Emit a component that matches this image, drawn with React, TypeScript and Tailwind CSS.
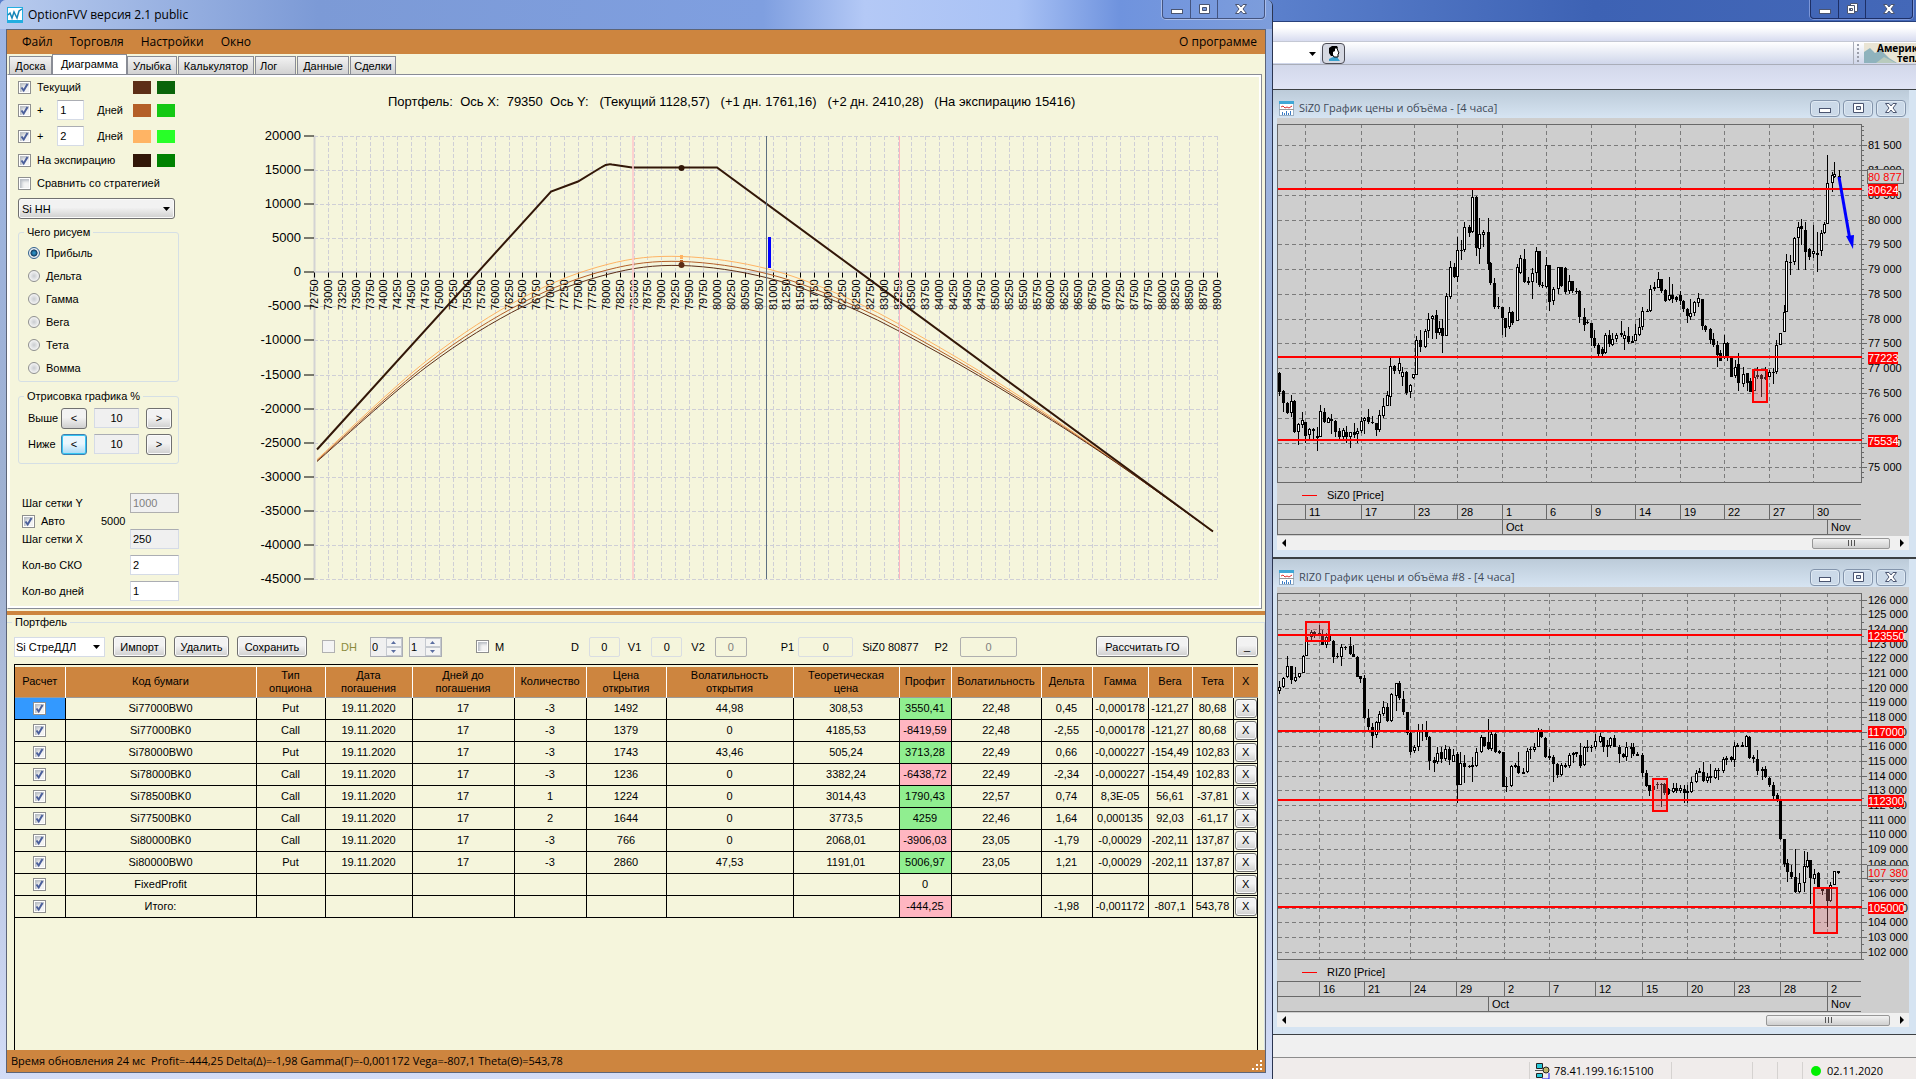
import React from 'react';
import clsx from 'clsx';

type Bar = [x: number, high: number, top: number, bottom: number, low: number, up: 0 | 1];

// Bars are sampled on the terminal grid: x in 0.412 px units, y in thirds of a pixel
const SI_BARS: Bar[] = [
  [23, 307, 309, 367, 378, 0], [32, 361, 364, 398, 425, 0], [41, 395, 400, 428, 432, 0], [50, 375, 393, 430, 440, 1],
  [59, 390, 393, 485, 490, 0], [68, 458, 462, 486, 524, 1], [78, 425, 450, 464, 474, 1], [86, 455, 457, 497, 520, 0],
  [95, 475, 478, 495, 508, 1], [104, 475, 478, 484, 510, 1], [113, 470, 498, 504, 542, 0], [122, 405, 423, 500, 500, 1],
  [131, 415, 425, 455, 460, 0], [140, 440, 445, 458, 460, 1], [149, 432, 448, 452, 492, 0], [158, 450, 452, 486, 500, 0],
  [167, 475, 484, 500, 510, 0], [176, 473, 480, 500, 506, 1], [185, 468, 487, 500, 518, 0], [195, 485, 487, 500, 533, 1],
  [203, 460, 487, 495, 505, 0], [212, 475, 484, 492, 518, 1], [221, 440, 453, 484, 490, 1], [229, 440, 443, 452, 492, 1],
  [238, 418, 441, 455, 462, 0], [247, 437, 455, 459, 462, 0], [258, 458, 460, 480, 497, 0], [265, 420, 436, 480, 487, 1],
  [275, 385, 409, 437, 443, 1], [284, 363, 375, 407, 407, 1], [292, 262, 287, 380, 407, 1], [302, 285, 287, 302, 312, 0],
  [312, 264, 280, 302, 312, 1], [321, 290, 306, 320, 347, 1], [329, 304, 306, 368, 374, 0], [339, 342, 345, 367, 384, 1],
  [348, 313, 313, 325, 327, 1], [355, 198, 210, 314, 314, 1], [365, 180, 210, 232, 246, 0], [375, 178, 183, 232, 234, 1],
  [383, 130, 148, 182, 203, 1], [392, 135, 137, 148, 206, 1], [402, 121, 136, 190, 206, 0], [410, 152, 175, 188, 195, 1],
  [418, 148, 174, 197, 248, 0], [428, 70, 79, 197, 197, 1], [438, -27, -8, 80, 88, 1], [446, -20, -8, 20, 25, 0],
  [455, -98, -60, 20, 35, 1], [464, -90, -60, -58, -30, 1], [472, -145, -129, -60, -55, 1], [482, -135, -130, -110, -100, 0],
  [491, -240, -219, -113, -110, 1], [499, -222, -220, -65, -42, 0], [508, -155, -108, -62, -18, 1], [518, -120, -114, -104, -70, 1],
  [528, -155, -115, -18, 0, 0], [535, -25, -20, 38, 45, 0], [544, 24, 38, 110, 117, 0], [554, 80, 108, 111, 118, 0],
  [562, 110, 112, 145, 195, 0], [571, 143, 143, 174, 200, 0], [581, 112, 126, 172, 176, 1], [588, 124, 127, 158, 165, 0],
  [599, -18, -10, 152, 152, 1], [608, -45, -36, 8, 12, 1], [617, -62, -32, 36, 40, 0], [627, 20, 34, 38, 44, 0],
  [635, -5, 10, 35, 87, 1], [645, -70, -56, 9, 40, 1], [652, -56, -56, 44, 50, 0], [661, 35, 44, 48, 55, 0],
  [671, -38, -14, 50, 55, 1], [678, -14, -14, 95, 122, 0], [688, 50, 58, 94, 104, 1], [699, -8, -8, 58, 72, 1],
  [707, -10, -8, 47, 50, 0], [715, -10, -6, 65, 72, 0], [725, 15, 34, 64, 72, 1], [733, 32, 34, 64, 68, 0],
  [742, 55, 62, 66, 72, 0], [751, 60, 64, 142, 158, 0], [761, 115, 142, 164, 182, 0], [770, 150, 157, 160, 162, 0],
  [778, 158, 160, 203, 227, 0], [787, 180, 203, 228, 234, 0], [797, 220, 225, 252, 258, 0], [805, 232, 236, 253, 258, 0],
  [814, 188, 196, 250, 253, 1], [824, 180, 196, 221, 231, 0], [831, 190, 206, 226, 227, 1], [841, 188, 196, 208, 216, 1],
  [851, 152, 190, 196, 202, 0], [860, 182, 195, 206, 240, 1], [869, 172, 198, 215, 221, 0], [878, 198, 212, 218, 218, 1],
  [887, 162, 193, 212, 212, 1], [896, 145, 171, 194, 198, 1], [904, 112, 124, 172, 181, 1], [914, 118, 122, 126, 126, 0],
  [922, 45, 57, 123, 127, 1], [931, 37, 52, 58, 62, 1], [941, 7, 28, 53, 53, 1], [949, 27, 27, 62, 68, 0],
  [958, 58, 61, 92, 96, 0], [968, 20, 75, 90, 94, 1], [976, 43, 74, 88, 98, 0], [986, 78, 82, 90, 95, 0],
  [994, 63, 76, 92, 104, 0], [1003, 90, 92, 118, 125, 0], [1011, 115, 118, 138, 158, 0], [1020, 88, 130, 140, 150, 1],
  [1030, 93, 97, 130, 138, 1], [1040, 68, 85, 98, 112, 1], [1048, 86, 87, 168, 180, 0], [1057, 165, 168, 180, 186, 0],
  [1067, 175, 178, 210, 223, 0], [1075, 190, 208, 226, 230, 0], [1084, 212, 226, 256, 292, 0], [1093, 240, 248, 272, 273, 0],
  [1102, 196, 218, 262, 267, 1], [1110, 216, 218, 262, 274, 0], [1120, 258, 265, 320, 320, 0], [1129, 270, 290, 317, 325, 1],
  [1137, 248, 283, 340, 362, 0], [1147, 290, 311, 342, 352, 1], [1157, 308, 310, 340, 362, 0], [1165, 325, 333, 366, 366, 0],
  [1174, 298, 322, 362, 362, 1], [1183, 292, 315, 322, 328, 1], [1191, 312, 315, 326, 382, 0], [1201, 292, 322, 328, 330, 0],
  [1210, 300, 307, 320, 322, 1], [1220, 293, 305, 308, 342, 0], [1227, 210, 226, 305, 312, 1], [1237, 190, 190, 226, 226, 1],
  [1247, 105, 127, 186, 186, 1], [1253, -48, -27, 127, 127, 1], [1263, -45, -25, -22, 15, 0], [1272, -98, -95, -25, -15, 1],
  [1281, -145, -128, -95, 0, 1], [1290, -153, -133, -122, -75, 0], [1299, -145, -120, -55, 0, 0], [1309, -65, -62, -40, -30, 0],
  [1317, -135, -57, -48, -35, 1], [1327, -115, -50, -46, 5, 0], [1337, -120, -112, -57, -42, 1], [1344, -145, -137, -110, -108, 1],
  [1353, -345, -260, -137, -137, 1], [1363, -295, -285, -262, -235, 1], [1370, -325, -287, -280, -275, 1], [1380, -300, -282, -275, -270, 0],
];

const RI_BARS: Bar[] = [
  [23, 394, 412, 424, 432, 1], [32, 381, 385, 412, 414, 1], [42, 318, 349, 381, 384, 1], [52, 348, 349, 391, 401, 0],
  [61, 351, 381, 392, 395, 1], [71, 368, 370, 382, 384, 1], [81, 315, 317, 370, 370, 1], [88, 250, 262, 318, 318, 1],
  [99, 240, 245, 262, 270, 1], [108, 243, 245, 256, 265, 0], [118, 225, 250, 256, 258, 0], [127, 240, 256, 284, 284, 0],
  [135, 250, 262, 284, 294, 1], [144, 237, 255, 272, 275, 0], [154, 270, 272, 320, 338, 0], [163, 310, 318, 322, 324, 0],
  [173, 282, 292, 320, 347, 1], [182, 288, 290, 293, 300, 0], [193, 262, 289, 311, 314, 0], [202, 285, 311, 320, 322, 0],
  [210, 318, 320, 380, 380, 0], [219, 378, 378, 386, 400, 0], [229, 375, 385, 505, 507, 0], [238, 478, 505, 530, 540, 0],
  [248, 520, 530, 557, 594, 0], [258, 512, 515, 556, 563, 1], [265, 484, 493, 518, 545, 1], [275, 453, 471, 493, 498, 1],
  [285, 458, 472, 512, 515, 0], [294, 430, 433, 512, 515, 1], [305, 398, 400, 437, 483, 1], [314, 392, 400, 445, 450, 0],
  [323, 422, 447, 485, 495, 0], [332, 485, 487, 550, 555, 0], [341, 545, 550, 605, 616, 0], [350, 586, 590, 604, 608, 1],
  [360, 523, 539, 590, 602, 1], [369, 523, 540, 545, 572, 0], [379, 513, 540, 560, 570, 0], [387, 558, 562, 632, 660, 0],
  [397, 622, 630, 638, 665, 0], [406, 590, 610, 636, 643, 1], [416, 590, 605, 628, 638, 0], [425, 585, 597, 628, 632, 1],
  [434, 592, 598, 630, 645, 0], [445, 598, 614, 635, 637, 1], [453, 605, 612, 705, 758, 0], [462, 605, 640, 704, 706, 1],
  [472, 615, 640, 650, 700, 0], [482, 645, 648, 652, 655, 0], [491, 620, 645, 650, 695, 0], [501, 595, 606, 648, 650, 1],
  [511, 555, 562, 606, 610, 1], [519, 560, 562, 588, 592, 0], [528, 508, 575, 598, 600, 0], [537, 545, 552, 598, 602, 1],
  [547, 550, 553, 605, 608, 0], [556, 600, 604, 608, 612, 0], [566, 605, 607, 710, 712, 0], [574, 680, 708, 710, 725, 1],
  [584, 645, 648, 708, 710, 1], [594, 640, 645, 650, 655, 0], [603, 605, 648, 670, 672, 0], [613, 655, 665, 672, 672, 0],
  [623, 595, 602, 665, 668, 1], [632, 590, 597, 600, 628, 0], [640, 580, 592, 600, 605, 1], [650, 535, 540, 590, 592, 1],
  [658, 538, 540, 562, 565, 0], [668, 560, 565, 620, 625, 0], [678, 598, 618, 624, 630, 0], [688, 615, 622, 642, 695, 0],
  [697, 640, 643, 675, 685, 0], [706, 640, 645, 675, 677, 1], [715, 640, 645, 650, 655, 0], [725, 610, 615, 648, 655, 1],
  [735, 605, 608, 614, 640, 0], [743, 605, 606, 612, 620, 0], [753, 580, 614, 648, 653, 0], [761, 587, 590, 646, 648, 1],
  [770, 570, 590, 594, 605, 0], [780, 585, 590, 592, 605, 0], [790, 553, 574, 590, 598, 1], [800, 550, 558, 575, 578, 1],
  [809, 560, 562, 590, 605, 0], [817, 570, 586, 592, 620, 0], [826, 562, 565, 588, 595, 1], [836, 555, 564, 590, 592, 0],
  [846, 585, 590, 612, 640, 0], [856, 610, 613, 620, 625, 0], [865, 575, 590, 622, 632, 1], [875, 580, 590, 598, 625, 1],
  [882, 578, 590, 612, 618, 0], [891, 605, 612, 618, 618, 0], [902, 610, 614, 668, 682, 0], [912, 660, 668, 707, 710, 0],
  [921, 704, 706, 724, 738, 0], [929, 690, 708, 720, 722, 1], [939, 695, 702, 706, 716, 0], [948, 700, 702, 706, 770, 0],
  [957, 700, 702, 728, 735, 0], [967, 715, 718, 732, 735, 0], [978, 700, 714, 726, 728, 1], [986, 700, 714, 722, 728, 0],
  [996, 705, 714, 724, 730, 1], [1004, 705, 716, 728, 758, 0], [1013, 705, 724, 728, 758, 0], [1023, 680, 695, 726, 728, 1],
  [1033, 660, 668, 695, 700, 1], [1042, 655, 663, 668, 670, 1], [1052, 637, 665, 692, 695, 0], [1061, 670, 680, 692, 698, 1],
  [1069, 642, 678, 684, 700, 0], [1079, 655, 660, 684, 686, 1], [1088, 655, 660, 664, 690, 0], [1099, 622, 626, 664, 668, 1],
  [1108, 618, 624, 630, 645, 0], [1118, 618, 620, 630, 635, 0], [1125, 575, 588, 630, 650, 1], [1134, 578, 584, 590, 592, 0],
  [1145, 575, 585, 590, 592, 0], [1155, 555, 558, 590, 592, 1], [1163, 558, 560, 624, 626, 0], [1173, 615, 620, 628, 640, 0],
  [1183, 600, 628, 664, 675, 0], [1193, 650, 656, 664, 690, 1], [1201, 648, 656, 682, 685, 0], [1210, 680, 683, 704, 710, 0],
  [1220, 695, 704, 738, 750, 0], [1230, 730, 735, 752, 755, 0], [1239, 750, 752, 868, 870, 0], [1247, 867, 868, 943, 950, 0],
  [1256, 928, 940, 966, 995, 0], [1265, 945, 965, 982, 988, 0], [1275, 897, 982, 1025, 1030, 0], [1285, 968, 998, 1025, 1030, 1],
  [1295, 903, 948, 1000, 1027, 1], [1304, 905, 930, 950, 955, 1], [1311, 930, 930, 985, 1062, 0], [1321, 958, 972, 988, 1002, 1],
  [1331, 965, 970, 1010, 1015, 0], [1341, 1013, 1018, 1022, 1035, 0], [1351, 1015, 1018, 1052, 1130, 0], [1360, 995, 1005, 1052, 1055, 1],
  [1368, 962, 964, 1004, 1005, 1], [1378, 962, 964, 968, 973, 0],
];

interface PriceChartProps {
  label: string;
  height: number;
  offset: number;
  bars: Bar[];
  top: number;
  bottom: number;
  first: number; // price of the upper grid line
  firstY: number;
  step: number;
  stepY: number;
  minor: number;
  count: number;
  dates: [number, string][];
  months: [number, string][];
  levels: [number, string][];
  last: [number, string];
  zones: [number, number, number, number][];
  arrow?: boolean;
}

const px = (u: number) => Math.round(u * 0.412) - 7;
const groups = (n: number) => `${Math.floor(n / 1000)} ${String(n % 1000).padStart(3, '0')}`;

const PriceChart: React.FC<PriceChartProps> = (p) => {
  const py = (u: number) => Math.round(u / 3) + p.offset;
  const right = px(1434);
  const top = py(p.top);
  const bottom = py(p.bottom);
  const axis = bottom + 22;
  const badge = p.last[1].length > 6 ? 36 : 30;
  const rows = Array.from({ length: p.count }, (_, i) => ({ y: py(p.firstY + i * p.stepY), v: p.first - i * p.step }));
  const minorStep = p.stepY / p.minor;
  const ticks: number[] = [];
  for (let u = p.firstY - Math.floor((p.firstY - p.top) / minorStep) * minorStep; u < p.bottom; u += minorStep) ticks.push(py(u));

  return (
    <svg
      viewBox={`0 0 632 ${p.height}`}
      className="block w-full bg-[#cecece] font-['Liberation_Sans',sans-serif] text-[11px]"
      shapeRendering="crispEdges"
      role="img"
      aria-label={p.label}
    >
      <g stroke="#7b7b7b" strokeDasharray="4 3">
        {rows.map((r) => <line key={r.v} x1="1" x2={right} y1={r.y + 0.5} y2={r.y + 0.5} />)}
        {p.dates.map(([x]) => <line key={x} x1={px(x) + 0.5} x2={px(x) + 0.5} y1={top} y2={bottom} />)}
      </g>
      <path d={`M0.5 ${bottom + 0.5}V${top + 0.5}H${right + 0.5}V${bottom + 0.5}Z`} fill="none" stroke="#696969" />
      {ticks.map((y) => <line key={y} x1={right} x2={right + 3} y1={y + 0.5} y2={y + 0.5} stroke="#696969" />)}
      {rows.map((r) => (
        <g key={r.v}>
          <line x1={right} x2={right + 6} y1={r.y + 0.5} y2={r.y + 0.5} stroke="#696969" />
          <text x={px(1452)} y={r.y + 4}>{groups(r.v)}</text>
        </g>
      ))}

      {p.bars.map(([x, high, t, b, low, up]) => {
        const h = Math.max(py(b) - py(t), 1);
        return (
          <g key={x}>
            <rect x={px(x)} y={py(high)} width="1" height={Math.max(py(low) - py(high), 1)} />
            <rect x={px(x) - 1} y={py(t)} width="3" height={h} />
            {up === 1 && h > 2 && <rect x={px(x)} y={py(t) + 1} width="1" height={h - 2} fill="#fff" />}
          </g>
        );
      })}

      {p.zones.map(([x1, y1, x2, y2]) => (
        <rect
          key={x1}
          x={px(x1)}
          y={py(y1)}
          width={px(x2) - px(x1)}
          height={py(y2) - py(y1)}
          fill="rgba(240,120,125,0.3)"
          stroke="#f00"
          strokeWidth="2"
        />
      ))}
      {p.levels.map(([y, text]) => (
        <g key={text}>
          <rect x="1" y={py(y) - 1} width={right} height="2" fill="#f00" />
          <rect x={px(1451)} y={py(y) - 5} width={badge} height="12" fill="#f00" />
          <text x={px(1452)} y={py(y) + 5} fill="#fff">{text}</text>
        </g>
      ))}
      <rect x={px(1449) + 0.5} y={py(p.last[0]) - 6.5} width={badge + 6} height="14" fill="#cecece" stroke="#696969" />
      <text x={px(1452)} y={py(p.last[0]) + 5} fill="#f00">{p.last[1]}</text>

      {p.arrow && (
        <g shapeRendering="auto">
          <line x1={px(1380)} y1={py(-278)} x2={px(1408)} y2={py(-90)} stroke="#00f" strokeWidth="3" />
          <polygon points={`${px(1397)},${py(-101)} ${px(1418)},${py(-104)} ${px(1414)},${py(-62)}`} fill="#00f" />
        </g>
      )}

      <rect x={px(77)} y={bottom + 13} width="15" height="1" fill="#f00" />
      <text x={px(139)} y={bottom + 17}>{p.label} [Price]</text>
      <path d={`M${right} ${axis + 0.5}H0.5V${axis + 30.5}H${right}M0 ${axis + 15.5}H${right}`} fill="none" stroke="#696969" />
      {p.dates.map(([x, text]) => (
        <g key={x}>
          <line x1={px(x) + 0.5} x2={px(x) + 0.5} y1={axis} y2={axis + 15} stroke="#696969" />
          <text x={px(x) + 4} y={axis + 12}>{text}</text>
        </g>
      ))}
      {p.months.map(([x, text]) => (
        <g key={x}>
          <line x1={px(x) + 0.5} x2={px(x) + 0.5} y1={axis + 15} y2={axis + 30} stroke="#696969" />
          <text x={px(x) + 4} y={axis + 27}>{text}</text>
        </g>
      ))}
    </svg>
  );
};

const WindowGlyph: React.FC<{ kind: string }> = ({ kind }) => (
  <svg width="14" height="12" viewBox="0 0 14 12" fill="#fff" stroke="#4b5570">
    {kind === 'min' && <rect x="1.5" y="6.5" width="11" height="4" />}
    {kind === 'max' && <path fillRule="evenodd" d="M2.5 1.5h10v9h-10zM5.5 4.5v3h4v-3z" />}
    {kind === 'restore' && (
      <>
        <path d="M5.5 .5h7v8h-7z" />
        <path fillRule="evenodd" d="M2.5 2.5h7v8h-7zM4.500 5.500v2h3v-2z" />
      </>
    )}
    {kind === 'close' && <path d="M1.500 1.500h3.500L7 4l2-2.500h3.500L9 6l3.500 4.500H9L7 8l-2 2.500H1.500L5 6z" />}
  </svg>
);

const CAPTIONS: Record<string, string> = { min: 'Свернуть', max: 'Развернуть', restore: 'Восстановить', close: 'Закрыть' };

/** Кнопки заголовка главного окна */
const CaptionButtons: React.FC<{ kinds: string[]; dark?: boolean }> = ({ kinds, dark }) => (
  <div
    className={clsx(
      'flex h-[19px] self-start overflow-hidden rounded-b border border-t-0',
      dark ? 'border-[#1d2f66] shadow-[0_0_0_1px_#7d97d8]' : 'border-[#44547f] shadow-[0_0_0_1px_#a9bdea]'
    )}
  >
    {kinds.map((kind) => (
      <button
        key={kind}
        aria-label={CAPTIONS[kind]}
        className={clsx(
          'flex items-center justify-center border-l first:border-l-0',
          kind === 'close' ? 'w-[47px]' : 'w-[27px]',
          dark ? 'border-[#1d2f66]' : 'border-[#44547f]'
        )}
      >
        <WindowGlyph kind={kind} />
      </button>
    ))}
  </div>
);

const ChartWindow: React.FC<{ title: string; thumb: string; children: React.ReactNode }> = ({ title, thumb, children }) => (
  <section className="border-y border-[#3c4043] bg-[#d6e4f2] pr-[7px] pb-[7px] pl-1">
    <header className="-ml-1 flex h-7 items-center bg-linear-to-b from-[#bccbd9] to-[#d6e4f2] pt-2 pl-[6px] font-['Open_Sans','Noto_Sans',sans-serif] text-[11px] text-[#3f4a58]">
      <svg width="15" height="15" viewBox="0 0 15 15" className="mr-[5px]">
        <rect x=".5" y=".5" width="14" height="14" fill="#fff" stroke="#9bb0c4" />
        <path d="M0 0h15v3H0z" fill="#3fa7d6" />
        <path d="M2 6l2-1 2 2 2-1 2 1 3-2" fill="none" stroke="#d33" />
        <path d="M3.500 14v-3M5.500 14v-2M7.500 14v-4M9.500 14v-2M11.500 14v-4" stroke="#3b7bc4" />
        <path d="M0 8.500h15" stroke="#999" />
      </svg>
      <span className="grow">{title}</span>
      <div className="flex gap-[3px] pr-[3px]">
        {['min', 'max', 'close'].map((kind) => (
          <button
            key={kind}
            aria-label={CAPTIONS[kind]}
            className="flex h-[17px] w-[30px] items-center justify-center rounded-sm border border-[#8394ab] bg-[#cbd9e8] shadow-[inset_0_0_0_1px_#dfe9f3]"
          >
            <WindowGlyph kind={kind} />
          </button>
        ))}
      </div>
    </header>
    {children}
    <div className="flex h-[14px] items-center bg-[#f0f0f0] px-1">
      <button aria-label="Влево" className="w-3 text-[#444]"><svg width="6" height="8"><path d="M5 0v8L1 4z" /></svg></button>
      <div className="flex grow justify-end pr-[3px]">
        <div className={clsx('flex h-[11px] items-center justify-center gap-px rounded-xs border border-[#979797] bg-linear-to-b from-[#f2f2f2] to-[#cfcfcf]', thumb)}>
          <i className="h-[6px] w-px bg-[#555]" />
          <i className="ml-px h-[6px] w-px bg-[#555]" />
          <i className="ml-px h-[6px] w-px bg-[#555]" />
        </div>
      </div>
      <button aria-label="Вправо" className="flex w-3 justify-end text-[#444]"><svg width="6" height="8"><path d="M1 0v8l4-4z" /></svg></button>
    </div>
  </section>
);

/* ---------- OptionFVV ---------- */

const CheckBox: React.FC<{ label: string; checked?: boolean; disabled?: boolean; id?: string }> = ({ label, checked, disabled, id }) => (
  <span className="relative inline-block h-[13px] w-[13px] shrink-0 align-middle">
    <input
      type="checkbox"
      id={id}
      aria-label={id ? undefined : label}
      defaultChecked={checked}
      disabled={disabled}
      className={clsx(
        'peer block h-[13px] w-[13px] appearance-none border bg-[#f4f4f4]',
        disabled ? 'border-[#b1b1b1]' : 'border-[#8e8f8f] shadow-[inset_0_0_0_1px_#fff,inset_2px_2px_3px_1px_#b8bdc4]'
      )}
    />
    <svg viewBox="0 0 13 13" className="pointer-events-none absolute inset-0 hidden peer-checked:block">
      <path d="M3.500 6.500l2.200 3L9.500 3" fill="none" stroke="#4b5f9b" strokeWidth="2" />
    </svg>
  </span>
);

const Field: React.FC<{ label: string; value: string; className: string; id?: string; disabled?: boolean }> = ({
  label,
  value,
  className,
  id,
  disabled,
}) => (
  <input
    type="text"
    id={id}
    aria-label={id ? undefined : label}
    defaultValue={value}
    disabled={disabled}
    className={clsx('border px-[2px] text-[11px] leading-4', disabled ? 'text-[#808080]' : 'text-black', className)}
  />
);

const BTN = 'rounded-[3px] border border-[#707070] bg-linear-to-b from-[#f2f2f2] from-45% to-[#cfcfcf] shadow-[inset_0_0_0_1px_#fafafa]';

const SERIES = [
  { label: 'Текущий', row: 'h-[22px]', a: 'bg-[#5c2e17]', b: 'bg-[#0a640a]' },
  { label: '+', days: '1', row: 'h-6', a: 'bg-[#b45f28]', b: 'bg-[#14c814]' },
  { label: '+', days: '2', row: 'h-7', a: 'bg-[#ffb464]', b: 'bg-[#28ff28]' },
  { label: 'На экспирацию', row: 'h-5', a: 'bg-[#321708]', b: 'bg-[#008200]' },
];

const GREEKS = ['Прибыль', 'Дельта', 'Гамма', 'Вега', 'Тета', 'Вомма'];

const GroupBox: React.FC<{ title: string; className?: string; children: React.ReactNode }> = ({ title, className, children }) => (
  <fieldset className={clsx('rounded-[3px] border border-[#d5dfe5]', className)}>
    <legend className="ml-[5px] px-[3px] leading-4">{title}</legend>
    {children}
  </fieldset>
);

const Sidebar: React.FC = () => (
  <div className="w-[180px] shrink-0 pl-[10px]">
    {SERIES.map((s, i) => (
      <div key={i} className={clsx('flex items-center pr-[13px]', s.row)}>
        <CheckBox id={`series-${i}`} label={s.label} checked />
        <label htmlFor={`series-${i}`} className="ml-[6px] grow">{s.label}</label>
        {s.days && (
          <label className="mr-[10px] flex items-center gap-[13px]">
            <Field label="Дней" value={s.days} className="h-5 w-[27px] border-[#d5dbe6] border-t-[#abadb3] bg-white" />
            Дней
          </label>
        )}
        <span className={clsx('h-[13px] w-[18px]', s.a)} />
        <span className={clsx('ml-[6px] h-[13px] w-[18px]', s.b)} />
      </div>
    ))}
    <div className="flex h-[26px] items-center">
      <CheckBox id="compare" label="Сравнить" />
      <label htmlFor="compare" className="ml-[6px]">Сравнить со стратегией</label>
    </div>
    <div className="relative mt-[2px] w-[157px]">
      <select aria-label="Стратегия" className={clsx('block h-[21px] w-full appearance-none pl-[3px]', BTN)}>
        <option>Si HH</option>
      </select>
      <svg width="7" height="4" className="pointer-events-none absolute top-[9px] right-[5px]"><path d="M0 0h7L3.500 4z" /></svg>
    </div>

    <GroupBox title="Чего рисуем" className="mt-[5px] w-[161px] pt-px pb-[2px]">
      {GREEKS.map((name, i) => (
        <label key={name} className="ml-[9px] flex h-[23px] items-center gap-[6px]">
          <input
            type="radio"
            name="greek"
            defaultChecked={i === 0}
            className="h-3 w-3 appearance-none rounded-full border border-[#8e8f8f] bg-[radial-gradient(circle,#c9ccd0,#f4f4f4_70%)] checked:border-[#33618c] checked:bg-[radial-gradient(circle,#2a8cc0_15%,#123a5c_45%,#e8eef4_55%)]"
          />
          {name}
        </label>
      ))}
    </GroupBox>

    <GroupBox title="Отрисовка графика %" className="mt-[6px] w-[161px] pt-px pb-[6px]">
      {['Выше', 'Ниже'].map((name, i) => (
        <div key={name} className="flex h-[26px] items-center pl-[9px]">
          <span className="w-[33px]">{name}</span>
          <button
            className={clsx(
              'h-[21px] w-[26px] rounded-[3px] border',
              i === 0
                ? 'border-[#707070] bg-linear-to-b from-[#f2f2f2] from-45% to-[#cfcfcf]'
                : 'border-[#3c7fb1] bg-linear-to-b from-[#eaf6fd] from-45% to-[#a7d9f5] shadow-[inset_0_0_0_1px_#35c6f3]'
            )}
          >
            &lt;
          </button>
          <Field label={name} value="10" className="mx-[7px] h-5 w-[45px] border-[#d5dbe6] border-t-[#abadb3] bg-[#f0f0f0] text-center" />
          <button className={clsx('h-[21px] w-[26px]', BTN)}>&gt;</button>
        </div>
      ))}
    </GroupBox>

    <div className="mt-[29px] ml-1 w-[157px]">
      <div className="flex h-5 items-center justify-between">
        <label htmlFor="grid-y">Шаг сетки Y</label>
        <Field id="grid-y" label="" value="1000" disabled className="h-5 w-[49px] border-[#afafaf] bg-[#f0f0f0]" />
      </div>
      <div className="flex h-4 items-center">
        <CheckBox id="auto" label="Авто" checked />
        <label htmlFor="auto" className="ml-[6px]">Авто</label>
        <span className="ml-9">5000</span>
      </div>
      {[
        ['Шаг сетки X', '250', 'bg-[#f0f0f0]'],
        ['Кол-во СКО', '2', 'bg-white'],
        ['Кол-во дней', '1', 'bg-white'],
      ].map(([name, value, bg]) => (
        <label key={name} className="mb-[6px] flex h-5 items-center justify-between">
          {name}
          <Field label={name} value={value} className={clsx('h-5 w-[49px] border-[#d5dbe6] border-t-[#abadb3]', bg)} />
        </label>
      ))}
    </div>
  </div>
);

// x, y, spread between the current and the +2 day curves
const CURVE: [number, number, number][] = [
  [317, 459, 2], [427, 360, 6], [523, 297, 9], [607, 264, 10], [681, 256, 9], [770, 269, 9],
  [857, 302, 8], [938, 346, 6], [1020, 396, 4], [1110, 457, 1], [1213, 531, 0],
];

// Сглаживание Catmull-Rom
const curvePath = (k: number) => {
  const pts = CURVE.map(([x, y, s]) => [x - 188, y - 76 + s * k]);
  return pts.slice(1).reduce((d, p, i) => {
    const p0 = pts[Math.max(i - 1, 0)];
    const p1 = pts[i];
    const p3 = pts[Math.min(i + 2, pts.length - 1)];
    return `${d}C${p1[0] + (p[0] - p0[0]) / 6} ${p1[1] + (p[1] - p0[1]) / 6} ${p[0] - (p3[0] - p1[0]) / 6} ${p[1] - (p3[1] - p1[1]) / 6} ${p[0]} ${p[1]}`;
  }, `M${pts[0][0]} ${pts[0][1]}`);
};

const ProfitChart: React.FC = () => {
  const gx = (i: number) => 126 + Math.round(i * 13.895);
  const gy = (v: number) => 59 + Math.round(((20000 - v) / 5000) * 34.08);
  const prices = Array.from({ length: 66 }, (_, i) => 72750 + i * 250);
  const values = Array.from({ length: 14 }, (_, i) => 20000 - i * 5000);

  return (
    <svg viewBox="0 0 1073 530" className="block min-w-0 grow font-['Liberation_Sans',sans-serif]" role="img" aria-label="Портфель">
      <text x="200" y="29" className="whitespace-pre text-[13px]">
        {'Портфель:  Ось X:  79350  Ось Y:   (Текущий 1128,57)   (+1 дн. 1761,16)   (+2 дн. 2410,28)   (На экспирацию 15416)'}
      </text>
      <g stroke="#cfcfd6" strokeDasharray="4 2" shapeRendering="crispEdges">
        {values.map((v) => <line key={v} x1="126" x2="1029" y1={gy(v) + 0.5} y2={gy(v) + 0.5} />)}
        {prices.map((v, i) => <line key={v} x1={gx(i) + 0.5} x2={gx(i) + 0.5} y1="59" y2={gy(-45000)} />)}
      </g>
      <g stroke="#d3d3d3" strokeWidth="2">
        <line x1="126.500" x2="126.500" y1="59" y2={gy(-45000)} />
        <line x1="126" x2="1029" y1={gy(0) + 0.5} y2={gy(0) + 0.5} />
      </g>
      {values.map((v) => (
        <g key={v}>
          <line x1="116" x2="126" y1={gy(v) + 0.5} y2={gy(v) + 0.5} stroke="#000" />
          <text x="113" y={gy(v) + 4} textAnchor="end" className="text-[13px]">{v}</text>
        </g>
      ))}
      {prices.map((v, i) => (
        <g key={v}>
          <line x1={gx(i) + 0.5} x2={gx(i) + 0.5} y1={gy(0) + 1} y2={gy(0) + 6} stroke="#000" />
          <text transform={`translate(${gx(i) + 4} ${gy(0) + 8}) rotate(-90)`} textAnchor="end" className="text-[11px]">{v}</text>
        </g>
      ))}
      <path d={curvePath(0)} fill="none" stroke="#ffb464" />
      <path d={curvePath(0.55)} fill="none" stroke="#b45f28" />
      <path d={curvePath(1)} fill="none" stroke="#5c2e17" />
      <path
        d="M129 373L363 115L390 105L413 91Q419 87 424 88L444 91H529L1025 455"
        fill="none"
        stroke="#321708"
        strokeWidth="2"
      />
      <g shapeRendering="crispEdges">
        <rect x="444" y="59" width="2" height="443" fill="#ffc8cb" opacity="0.8" />
        <rect x="711" y="59" width="1" height="443" fill="#ffb6c1" />
        <rect x="578" y="59" width="1" height="443" fill="#5d6f80" />
        <rect x="580" y="160" width="3" height="31" fill="#00f" />
        <rect x="492" y="178" width="3" height="4" fill="#ffb464" />
        <rect x="492" y="183" width="3" height="4" fill="#b45f28" />
      </g>
      <circle cx="493.500" cy="91.500" r="3" fill="#321708" />
      <circle cx="493.500" cy="188.500" r="3" fill="#5c2e17" />
    </svg>
  );
};

const COLUMNS: [string, string][] = [
  ['Расчет', 'w-[50px]'], ['Код бумаги', 'w-[191px]'], ['Тип\nопциона', 'w-[69px]'], ['Дата\nпогашения', 'w-[87px]'],
  ['Дней до\nпогашения', 'w-[102px]'], ['Количество', 'w-[72px]'], ['Цена\nоткрытия', 'w-[80px]'],
  ['Волатильность\nоткрытия', 'w-[127px]'], ['Теоретическая\nцена', 'w-[106px]'], ['Профит', 'w-[52px]'],
  ['Волатильность', 'w-[90px]'], ['Дельта', 'w-[51px]'], ['Гамма', 'w-[56px]'], ['Вега', 'w-[44px]'], ['Тета', 'w-[41px]'], ['X', 'w-[25px]'],
];

const EXPIRY = '19.11.2020';
const ROWS: string[][] = [
  ['Si77000BW0', 'Put', EXPIRY, '17', '-3', '1492', '44,98', '308,53', '3550,41', '22,48', '0,45', '-0,000178', '-121,27', '80,68'],
  ['Si77000BK0', 'Call', EXPIRY, '17', '-3', '1379', '0', '4185,53', '-8419,59', '22,48', '-2,55', '-0,000178', '-121,27', '80,68'],
  ['Si78000BW0', 'Put', EXPIRY, '17', '-3', '1743', '43,46', '505,24', '3713,28', '22,49', '0,66', '-0,000227', '-154,49', '102,83'],
  ['Si78000BK0', 'Call', EXPIRY, '17', '-3', '1236', '0', '3382,24', '-6438,72', '22,49', '-2,34', '-0,000227', '-154,49', '102,83'],
  ['Si78500BK0', 'Call', EXPIRY, '17', '1', '1224', '0', '3014,43', '1790,43', '22,57', '0,74', '8,3E-05', '56,61', '-37,81'],
  ['Si77500BK0', 'Call', EXPIRY, '17', '2', '1644', '0', '3773,5', '4259', '22,46', '1,64', '0,000135', '92,03', '-61,17'],
  ['Si80000BK0', 'Call', EXPIRY, '17', '-3', '766', '0', '2068,01', '-3906,03', '23,05', '-1,79', '-0,00029', '-202,11', '137,87'],
  ['Si80000BW0', 'Put', EXPIRY, '17', '-3', '2860', '47,53', '1191,01', '5006,97', '23,05', '1,21', '-0,00029', '-202,11', '137,87'],
  ['FixedProfit', '', '', '', '', '', '', '', '0', '', '', '', '', ''],
  ['Итого:', '', '', '', '', '', '', '', '-444,25', '', '-1,98', '-0,001172', '-807,1', '543,78'],
];

const profitColor = (v: string) => (v.startsWith('-') ? 'bg-[#ffb6c1]' : v === '0' ? '' : 'bg-[#90ee90]');

const PortfolioTable: React.FC = () => (
  <div className="mr-[6px] ml-[7px] grow border border-b-0 border-black">
    <table className="w-full table-fixed border-collapse text-center">
      <colgroup>
        {COLUMNS.map(([name, width], i) => <col key={name + i} className={width} />)}
      </colgroup>
      <thead>
        <tr className="h-[31px] border-t-2 border-b border-t-[#f5f5dc] border-b-[#9a9a9a] bg-[#cd853f]">
          {COLUMNS.map(([name], i) => (
            <th key={name + i} className="border-r border-r-white p-0 leading-[13px] font-normal whitespace-pre last:border-r-0">{name}</th>
          ))}
        </tr>
      </thead>
      <tbody>
        {ROWS.map((row, i) => (
          <tr key={row[0]} className="h-[22px]">
            <td className={clsx('border-r border-b border-black p-0 leading-none', i === 0 && 'bg-[#3399ff]')}>
              <CheckBox label={row[0]} checked />
            </td>
            {row.map((cell, j) => (
              <td key={j} className={clsx('border-r border-b border-black p-0 leading-[13px] whitespace-nowrap', j === 8 && profitColor(cell))}>
                {cell}
              </td>
            ))}
            <td className="border-b border-black p-0">
              <button className={clsx('mx-auto block h-[19px] w-[22px] leading-none', BTN)}>X</button>
            </td>
          </tr>
        ))}
      </tbody>
    </table>
  </div>
);

const Spinner: React.FC<{ label: string; value: string }> = ({ label, value }) => (
  <span className="flex h-5 w-[33px] border border-[#abadb3] bg-[#f0f0f0]">
    <input type="text" aria-label={label} defaultValue={value} className="w-[15px] bg-transparent pl-px" />
    <span className="flex w-4 flex-col">
      <button aria-label="Больше" className="flex h-[9px] items-center justify-center border border-[#c5c9d0] bg-[#f4f4f4]">
        <svg width="5" height="3"><path d="M0 3h5L2.500 0z" fill="#5a6da0" /></svg>
      </button>
      <button aria-label="Меньше" className="flex h-[9px] items-center justify-center border border-[#c5c9d0] bg-[#f4f4f4]">
        <svg width="5" height="3"><path d="M0 0h5L2.500 3z" fill="#5a6da0" /></svg>
      </button>
    </span>
  </span>
);

const VALUE = 'h-5 rounded-xs text-center bg-[#f5f5dc]';

const PortfolioBar: React.FC = () => (
  <div className="flex h-[35px] items-center pl-[7px]">
    <div className="relative mr-2 w-[91px]">
      <select aria-label="Портфель" className="block h-5 w-full appearance-none border border-[#d5dbe6] bg-white pl-px">
        <option>Si СтреДДЛ</option>
      </select>
      <svg width="7" height="4" className="pointer-events-none absolute top-2 right-[5px]"><path d="M0 0h7L3.500 4z" /></svg>
    </div>
    <button className={clsx('mr-2 h-[21px] w-[53px]', BTN)}>Импорт</button>
    <button className={clsx('mr-2 h-[21px] w-[55px]', BTN)}>Удалить</button>
    <button className={clsx('mr-[15px] h-[21px] w-[70px]', BTN)}>Сохранить</button>
    <CheckBox id="dh" label="DH" disabled />
    <label htmlFor="dh" className="mr-[13px] ml-[6px] text-[#8b8b3c]">DH</label>
    <Spinner label="DH" value="0" />
    <span className="w-[6px]" />
    <Spinner label="Шаг" value="1" />
    <span className="w-[34px]" />
    <CheckBox id="m" label="M" />
    <label htmlFor="m" className="ml-[6px] w-[76px]">M</label>
    <label className="flex items-center gap-[10px]">D<Field label="D" value="0" className={clsx('w-[31px] border-[#d9dde2]', VALUE)} /></label>
    <label className="ml-2 flex items-center gap-[10px]">V1<Field label="V1" value="0" className={clsx('w-[31px] border-[#d9dde2]', VALUE)} /></label>
    <label className="ml-[9px] flex items-center gap-[10px]">V2<Field label="V2" value="0" disabled className={clsx('w-8 border-[#afafaf]', VALUE)} /></label>
    <label className="ml-[34px] flex items-center gap-1">P1<Field label="P1" value="0" className={clsx('w-[55px] border-[#d9dde2]', VALUE)} /></label>
    <span className="ml-[9px]">SiZ0 80877</span>
    <label className="ml-4 flex items-center gap-3">P2<Field label="P2" value="0" disabled className={clsx('w-[57px] border-[#afafaf]', VALUE)} /></label>
    <button className={clsx('ml-auto h-[21px] w-[93px]', BTN)}>Рассчитать ГО</button>
    <button aria-label="Свернуть" className={clsx('mr-[6px] ml-[47px] h-[21px] w-[22px] leading-none', BTN)}>_</button>
  </div>
);

const TABS: [string, string][] = [
  ['Доска', 'w-[43px]'], ['Диаграмма', ''], ['Улыбка', 'w-[50px]'], ['Калькулятор', 'w-[76px]'],
  ['Лог', 'w-[41px]'], ['Данные', 'w-[52px]'], ['Сделки', 'w-[46px]'],
];

const UI_FONT = "font-['Open_Sans','Noto_Sans',sans-serif]";

const OptionWindow: React.FC = () => (
  <section className="flex min-w-0 flex-col rounded-t-md border-r border-[#2b3550] bg-linear-to-b from-[#9db6e6] via-[#9fb0d0] to-[#d3dcf6] pr-[6px] pb-[6px] pl-[6px]">
    <header className="-mx-[6px] flex h-[29px] items-center rounded-t-md bg-[linear-gradient(90deg,#b8cbee,#7c9ad6_25%,#7f9fe0_60%,#b4c9f6_68%,#a9c2f5_80%,#6f93de_88%,#7d9ddb)] px-[7px]">
      <svg width="16" height="16" viewBox="0 0 16 16" className="mr-[5px]">
        <rect x=".5" y=".5" width="15" height="15" fill="#fff" stroke="#22aee0" />
        <path d="M0 14.500h16" stroke="#22aee0" strokeWidth="3" />
        <path d="M1 8l2-2 2 5 2-6 3 6 2-7 3-2" fill="none" stroke="#1585b8" strokeWidth="1.500" />
      </svg>
      <h1 className={clsx('grow text-[12px]', UI_FONT)}>OptionFVV версия 2.1 public</h1>
      <CaptionButtons kinds={['min', 'max', 'close']} />
    </header>

    <div className="flex grow flex-col border border-[#5c6478] bg-[#f5f5dc]">
      <nav className={clsx('flex h-6 items-center bg-[#cd853f] pr-[8px] pl-[15px] text-[12px]', UI_FONT)}>
        <button className="mr-[17px]">Файл</button>
        <button className="mr-[17px]">Торговля</button>
        <button className="mr-[17px]">Настройки</button>
        <button>Окно</button>
        <button className="ml-auto">О программе</button>
      </nav>

      <div className="flex h-5 items-end pl-[2px]" role="tablist">
        {TABS.map(([name, width]) => (
          <button
            key={name}
            role="tab"
            aria-selected={name === 'Диаграмма'}
            className={clsx(
              'border border-b-0 border-[#898c95]',
              name === 'Диаграмма'
                ? 'h-5 w-[75px] bg-white pb-[2px]'
                : ['h-[18px] bg-linear-to-b from-[#f2f2f2] to-[#d2d2d2]', name !== 'Доска' && 'mr-px', width],
              name === 'Лог' && 'pl-1 text-left'
            )}
          >
            {name}
          </button>
        ))}
      </div>
      <div className="mr-[3px] flex border border-[#898c95] border-l-white bg-[#f5f5dc] py-px shadow-[inset_0_0_0_2px_#fff]">
        <Sidebar />
        <ProfitChart />
      </div>
      <div className="mt-[2px] h-1 bg-[#cd853f]" />

      <fieldset className="flex min-w-0 grow flex-col border-t border-r border-[#d5dfe5]">
        <legend className="ml-[5px] px-[3px] leading-[14px]">Портфель</legend>
        <PortfolioBar />
        <PortfolioTable />
      </fieldset>

      <footer className={clsx('flex h-[22px] items-center justify-between bg-[#cd853f] pl-1 text-[11px] whitespace-pre', UI_FONT)}>
        {'Время обновления 24 мс  Profit=-444,25 Delta(Δ)=-1,98 Gamma(Γ)=-0,001172 Vega=-807,1 Theta(Θ)=543,78'}
        <svg width="12" height="12" className="mr-[1px] self-end" fill="#fff">
          <path d="M8 0h2v2H8zM4 4h2v2H4zM8 4h2v2H8zM0 8h2v2H0zM4 8h2v2H4zM8 8h2v2H8z" />
        </svg>
      </footer>
    </div>
  </section>
);

const Terminal: React.FC = () => (
  <section className="flex min-w-0 flex-col bg-[#f0f0f0]">
    <div className="flex h-[22px] justify-end border-b border-[#27407c] bg-linear-to-r from-[#5b80cc] via-[#3d62b4] to-[#4468b8] pr-[3px]">
      <CaptionButtons kinds={['min', 'restore', 'close']} dark />
    </div>
    <div className="h-5 border-b border-[#c4c8d4] bg-linear-to-b from-white from-30% to-[#d8dcf0]" />
    <div className="flex h-[23px] items-center border-b border-[#a9adb8] bg-linear-to-b from-white to-[#cfd6ea]">
      <div className="relative h-[20px] w-[47px]">
        <select aria-label="Инструмент" className="h-full w-full appearance-none bg-white"><option></option></select>
        <svg width="7" height="4" className="pointer-events-none absolute top-[9px] right-[4px]"><path d="M0 0h7L3.500 4z" /></svg>
      </div>
      <button aria-label="Профиль" className="ml-[2px] flex h-[21px] w-[23px] items-center justify-center rounded border border-[#4c4c55] bg-[#d5d8e2]">
        <svg width="16" height="16" viewBox="0 0 16 16">
          <path d="M3 16v-2l4-2h4l3 4z" fill="#3aa0cc" />
          <path d="M7 3h4l1 3 1 2-1 1v3H8L6 9z" fill="#fff" stroke="#000" />
          <path d="M3 8V3l3-2h5l1 2H9v3L7 7v4H5z" />
        </svg>
      </button>
      <div className="ml-auto flex h-full w-[63px] items-center gap-[5px] overflow-hidden border-l border-[#a9adb8] pl-[3px]">
        <span className="h-[18px] border-l-2 border-dotted border-[#9a9eaa]" />
        <div className="relative h-5 w-[60px] shrink-0 bg-[#e9e4d4]">
          <svg width="60" height="20" className="absolute inset-0">
            <path d="M0 20V9l6-4 5 5 6-3 8 8 8 5z" fill="#8fb3bd" />
            <path d="M12 20l8-6 12 6z" fill="#b9cbbd" />
          </svg>
          <p className={clsx('relative pl-[13px] text-[10px] leading-[10px] font-bold', UI_FONT)}>
            Америка
            <span className="block pl-5">тепло</span>
          </p>
        </div>
      </div>
    </div>
    <div className="h-6 bg-linear-to-b from-[#d2d8ea] to-[#e0e4f5]" />

    <ChartWindow title="SiZ0 График цены и объёма - [4 часа]" thumb="w-[78px]">
      <PriceChart
        label="SiZ0"
        height={418}
        offset={152}
        bars={SI_BARS}
        top={-437}
        bottom={636}
        first={81500}
        firstY={-374}
        step={500}
        stepY={74.3}
        minor={5}
        count={14}
        dates={[[86, '11'], [222, '17'], [349, '23'], [455, '28'], [562, '1'], [671, '6'], [778, '9'], [887, '14'], [994, '19'], [1101, '22'], [1210, '27'], [1317, '30']]}
        months={[[562, 'Oct'], [1353, 'Nov']]}
        levels={[[-243, '80624'], [261, '77223'], [510, '75534']]}
        last={[-282, '80 877']}
        zones={[[1173, 300, 1207, 397]]}
        arrow
      />
    </ChartWindow>
    <ChartWindow title="RIZ0 График цены и объёма #8 - [4 часа]" thumb="w-[124px]">
      <PriceChart
        label="RIZ0"
        height={426}
        offset={-37}
        bars={RI_BARS}
        top={130}
        bottom={1228}
        first={126000}
        firstY={149}
        step={1000}
        stepY={44}
        minor={2}
        count={25}
        dates={[[118, '16'], [229, '21'], [341, '24'], [452, '29'], [567, '2'], [678, '7'], [790, '12'], [902, '15'], [1013, '20'], [1125, '23'], [1239, '28'], [1351, '2']]}
        months={[[528, 'Oct'], [1351, 'Nov']]}
        levels={[[255, '123550'], [543, '117000'], [750, '112300'], [1071, '105000']]}
        last={[967, '107 380']}
        zones={[[88, 216, 142, 272], [930, 687, 964, 783], [1321, 1014, 1375, 1150]]}
      />
    </ChartWindow>

    <div className="grow" />
    <footer className={clsx('flex h-[22px] items-center border-t border-[#8c8c8c] bg-[#f0eceb] pt-1 text-[11px]', UI_FONT)}>
      <span className="grow" />
      <span className="flex w-[142px] items-center gap-1 border-l border-[#d5d2d0] pl-1">
        <svg width="16" height="18" viewBox="0 0 16 18">
          <path d="M2.500 1.500h6v5h-6zM2.500 11.500h6v4h-6z" fill="#28c8d8" stroke="#222" />
          <path d="M1 8h9v1H1zM1 17h9v1H1z" fill="#555" />
          <path d="M8 17h7v-6" fill="none" stroke="#11f" />
          <circle cx="12" cy="8" r="3" fill="#bdb76b" stroke="#222" />
        </svg>
        78.41.199.16:15100
      </span>
      <span className="h-full w-[81px] border-l border-[#d5d2d0]" />
      <span className="h-full w-[25px] border-l border-[#d5d2d0]" />
      <span className="h-full w-[25px] border-l border-[#d5d2d0]" />
      <span className="flex h-full w-[114px] items-center gap-[6px] border-l border-[#d5d2d0] pl-2">
        <i className="h-[10px] w-[10px] rounded-full bg-[#00f000]" />
        02.11.2020
      </span>
    </footer>
  </section>
);

export default function App() {
  return (
    <main className="grid min-h-screen grid-cols-[1273fr_643fr] bg-[#5b80cc] font-['Liberation_Sans',sans-serif] text-[11px] leading-4 text-black">
      <OptionWindow />
      <Terminal />
    </main>
  );
}
